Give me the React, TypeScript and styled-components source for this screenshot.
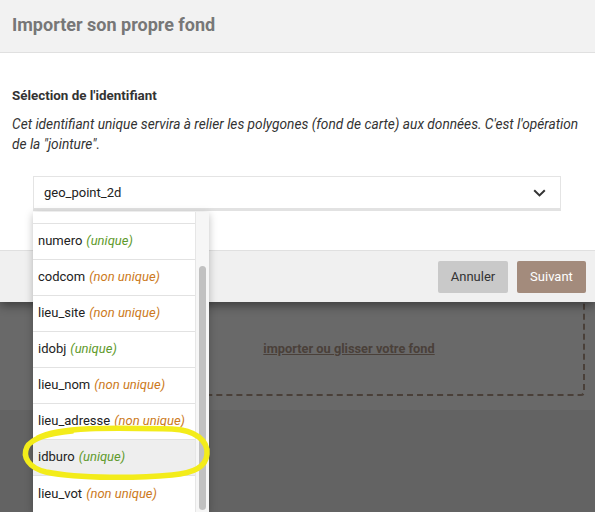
import React from "react";
import styled, { createGlobalStyle } from "styled-components";

const Global = createGlobalStyle`
  html, body { margin: 0; padding: 0; }
  body { font-family: Roboto, "Liberation Sans", sans-serif; overflow: hidden; background: #636363; }
  * { box-sizing: border-box; }
`;

const Page = styled.div`
  position: relative;
  width: 595px;
  height: 512px;
  overflow: hidden;
  display: flex;
  flex-direction: column;
  background: #636363;
`;

const Modal = styled.div`
  position: relative;
  z-index: 2;
  background: #fff;
  box-shadow: 0 3px 10px rgba(0, 0, 0, 0.45);
  display: flex;
  flex-direction: column;
`;

const Header = styled.div`
  height: 53px;
  background: #f2f2f2;
  border-bottom: 1px solid #e0e0e0;
  display: flex;
  align-items: center;
  padding: 0 12px 3px;
`;

const Title = styled.h1`
  margin: 0;
  font-size: 18px;
  font-weight: 700;
  color: #777;
`;

const Body = styled.div`
  padding: 34px 12px 39px;
`;

const Subtitle = styled.h2`
  margin: 0;
  font-size: 13.4px;
  line-height: 18px;
  font-weight: 700;
  color: #333;
`;

const Help = styled.p`
  margin: 9px 0 0;
  font-size: 13.7px;
  line-height: 20px;
  font-style: italic;
  color: #333;
`;

const SelectWrap = styled.div`
  position: relative;
  margin: 22px 22px 0 21px;
`;

const SelectBox = styled.div`
  height: 35px;
  border: 1px solid #e4e4e4;
  border-bottom: 3px solid #e2e2e2;
  display: flex;
  align-items: center;
  justify-content: space-between;
  padding: 0 14px 0 10px;
  font-size: 13px;
  color: #222;
`;

const Dropdown = styled.div`
  position: absolute;
  top: 100%;
  left: 0;
  margin-top: 1px;
  width: 176px;
  height: 300px;
  background: #fff;
  display: flex;
  box-shadow: 0 2px 8px rgba(0, 0, 0, 0.25);
  z-index: 5;
`;

const List = styled.ul`
  list-style: none;
  margin: 0;
  padding: 0;
  flex: 1;
  overflow: hidden;
  display: flex;
  flex-direction: column;
  justify-content: flex-end;
`;

const Option = styled.li<{ $active?: boolean }>`
  flex-shrink: 0;
  height: 36px;
  border-bottom: 1px solid #e2e2e2;
  display: flex;
  align-items: center;
  padding: 0 0 2px 5px;
  font-size: 13px;
  color: #222;
  white-space: nowrap;
  background: ${(p) => (p.$active ? "#eeeeee" : "#fff")};
  &:last-child { border-bottom: none; }
`;

const Tag = styled.span<{ $unique: boolean }>`
  margin-left: 4px;
  font-style: italic;
  color: ${(p) => (p.$unique ? "#5f9a2c" : "#cc7a1c")};
`;

const Track = styled.div`
  width: 14px;
  background: #f6f6f6;
  border-left: 1px solid #e6e6e6;
  display: flex;
  flex-direction: column;
  justify-content: flex-end;
  padding: 0 3px 2px 3px;
`;

const Thumb = styled.div`
  height: 244px;
  border-radius: 4px;
  background: #c1c1c1;
`;

const Footer = styled.div`
  height: 52px;
  background: #f0f0f0;
  border-top: 1px solid #e0e0e0;
  display: flex;
  justify-content: flex-end;
  align-items: center;
  gap: 9px;
  padding: 0 9px 0 0;
`;

const Button = styled.button<{ $primary?: boolean }>`
  height: 32px;
  width: ${(p) => (p.$primary ? "69px" : "70px")};
  border: none;
  border-radius: 2px;
  font-family: Roboto, "Liberation Sans", sans-serif;
  font-size: 13px;
  color: ${(p) => (p.$primary ? "#fff" : "#333")};
  background: ${(p) => (p.$primary ? "#a38b7c" : "#c9c9c9")};
`;

const Backdrop = styled.div`
  flex: 1;
  background: #636363;
`;

const UploadSection = styled.div`
  background: #696969;
  padding: 0 10px 14px 113px;
`;

const DropZone = styled.div`
  height: 94px;
  border: 2px dashed #4a4039;
  border-top: none;
  border-bottom-right-radius: 4px;
  display: flex;
  align-items: center;
  justify-content: center;
`;

const DropLink = styled.span`
  font-size: 12.8px;
  font-weight: 700;
  color: #4a4039;
  text-decoration: underline;
`;

const Annotation = styled.svg`
  position: absolute;
  left: 0;
  top: 0;
  z-index: 10;
  pointer-events: none;
`;

const options: { name: string; unique: boolean }[] = [
  { name: "geo_point_2d", unique: true },
  { name: "commune", unique: false },
  { name: "numero", unique: true },
  { name: "codcom", unique: false },
  { name: "lieu_site", unique: false },
  { name: "idobj", unique: true },
  { name: "lieu_nom", unique: false },
  { name: "lieu_adresse", unique: false },
  { name: "idburo", unique: true },
  { name: "lieu_vot", unique: false },
];

export default function App() {
  return (
    <Page>
      <Global />
      <Modal>
        <Header>
          <Title>Importer son propre fond</Title>
        </Header>
        <Body>
          <Subtitle>Sélection de l'identifiant</Subtitle>
          <Help>
            Cet identifiant unique servira à relier les polygones (fond de carte) aux données. C'est l'opération
            de la "jointure".
          </Help>
          <SelectWrap>
            <SelectBox>
              <span>geo_point_2d</span>
              <svg width="13" height="8" viewBox="0 0 13 8">
                <polyline points="1.2,1.2 6.5,6.4 11.8,1.2" fill="none" stroke="#333" strokeWidth="2" />
              </svg>
            </SelectBox>
            <Dropdown>
              <List>
                {options.map((o) => (
                  <Option key={o.name} $active={o.name === "idburo"}>
                    {o.name}
                    <Tag $unique={o.unique}>{o.unique ? "(unique)" : "(non unique)"}</Tag>
                  </Option>
                ))}
              </List>
              <Track>
                <Thumb />
              </Track>
            </Dropdown>
          </SelectWrap>
        </Body>
        <Footer>
          <Button>Annuler</Button>
          <Button $primary>Suivant</Button>
        </Footer>
      </Modal>
      <Backdrop>
        <UploadSection>
          <DropZone>
            <DropLink>importer ou glisser votre fond</DropLink>
          </DropZone>
        </UploadSection>
      </Backdrop>
      <Annotation width="595" height="512" viewBox="0 0 595 512">
        <path
          d="M 38 438 C 60 426, 120 428, 172 429 C 196 430, 208 441, 207 454 C 206 467, 194 473, 172 475 C 140 478, 80 479, 46 472 C 29 468, 22 457, 27 447 C 31 439, 48 433, 72 431"
          fill="none"
          stroke="#f3ec1a"
          strokeWidth="5.5"
          strokeLinecap="round"
          strokeLinejoin="round"
        />
      </Annotation>
    </Page>
  );
}
